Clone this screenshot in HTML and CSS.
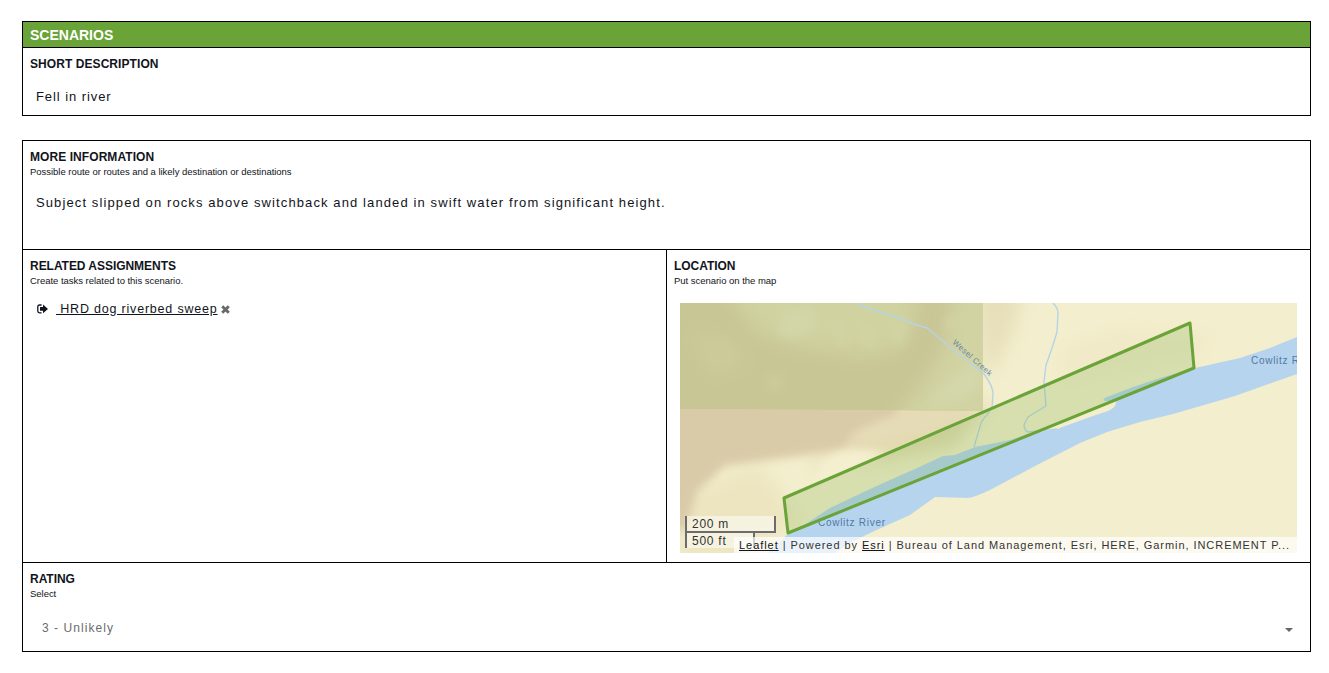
FILE: index.html
```html
<!DOCTYPE html>
<html lang="en">
<head>
<meta charset="utf-8">
<title>Scenarios</title>
<link rel="stylesheet" href="styles.css">
</head>
<body>
<main class="form">
  <section class="panel">
    <h1 class="panel-title">SCENARIOS</h1>
    <div class="field field-short">
      <h2 class="label">SHORT DESCRIPTION</h2>
      <p class="value value-short">Fell in river</p>
    </div>
  </section>

  <section class="panel">
    <div class="field field-info">
      <h2 class="label">MORE INFORMATION</h2>
      <p class="hint">Possible route or routes and a likely destination or destinations</p>
      <p class="value value-info">Subject slipped on rocks above switchback and landed in swift water from significant height.</p>
    </div>
    <div class="split">
      <div class="field">
        <h2 class="label label-tight">RELATED ASSIGNMENTS</h2>
        <p class="hint">Create tasks related to this scenario.</p>
        <div class="assignment">
          <svg class="icon-out" viewBox="0 0 11 10"><path d="M4.600 1H2.500Q.8 1 .8 2.700V7.100Q.8 8.800 2.500 8.800H4.600" fill="none" stroke="#111420" stroke-width="1.300"/><path d="M3 3H6V.6L11 4.900L6 9.200V6.800H3Z" fill="#111420"/></svg>
          <a class="assignment-link">&nbsp;HRD dog riverbed sweep</a>
          <svg class="icon-x" viewBox="0 0 9 9"><path d="M1.200 1.200L7.800 7.800M7.800 1.200L1.200 7.800" stroke="#6a6a6a" stroke-width="2.900"/></svg>
        </div>
      </div>
      <div class="field">
        <h2 class="label label-tight">LOCATION</h2>
        <p class="hint">Put scenario on the map</p>
        <div class="map">
          <svg class="map-canvas" viewBox="680 303 617 250">
            <defs>
              <filter id="soft" x="-20%" y="-20%" width="140%" height="140%"><feGaussianBlur stdDeviation="4"/></filter>
              <filter id="softer" x="-30%" y="-30%" width="160%" height="160%"><feGaussianBlur stdDeviation="9"/></filter>
              <clipPath id="forest"><path d="M680 303H983V411L680 409Z"/></clipPath>
            </defs>
            <rect x="680" y="303" width="617" height="250" fill="#f3eecd"/>
            <g filter="url(#softer)">
              <path d="M975 285H1025L1010 340L985 380Z" fill="#e7dfba"/>
              <path d="M1060 350L1120 330L1210 335L1200 355L1060 380Z" fill="#f1e9c8"/>
              <path d="M860 400H990L975 420L900 455L810 470Z" fill="#e4d9b2"/>
              <path d="M680 495L760 465L800 520L740 560H680Z" fill="#ece5c0"/>
              <path d="M880 440L975 418L955 445L880 460Z" fill="#e0d9ad"/>
            </g>
            <path d="M670 395H900L895 420L850 437L845 449L800 456L725 466L697 492L686 530H670Z" fill="#dacba8" filter="url(#soft)"/>
            <path d="M814 480L819 462L838 451L858 449L885 453L835 485Z" fill="#f4efcf" filter="url(#soft)"/>
            <path d="M850 438Q885 410 945 412L990 406L930 432L870 443Z" fill="#e5dbb6" filter="url(#soft)"/>
            <g clip-path="url(#forest)">
              <path d="M680 303H983V411L680 409Z" fill="#c9c696"/>
              <g filter="url(#softer)">
                <path d="M725 285H920L912 325L902 348L860 356L790 344L755 330Z" fill="#d0d2a0"/>
                <path d="M690 330L735 340L745 365L710 375Z" fill="#cccb9a"/>
                <path d="M955 285H1000V425H890L918 392L945 350Z" fill="#d1d3a3"/>
              </g>
              <g filter="url(#soft)">
                <path d="M783 312L812 306L818 326L796 338L778 334Z" fill="#d3d6a7"/>
                <path d="M830 322L842 320L846 345L836 340ZM858 330L870 322L876 348L864 346ZM890 325L908 318L902 346L893 340Z" fill="#d1d4a3"/>
                <path d="M850 347L858 338L864 352L856 358ZM823 340L830 333L834 345L828 350Z" fill="#cdcd9b"/>
                <path d="M928 407L952 378L976 360L982 385L960 400Z" fill="#d4d7a9"/>
                <path d="M945 322L958 315L958 324L948 329Z" fill="#d3d5a5"/>
                <path d="M765 378L782 374L783 388L770 391Z" fill="#cccb9a"/>
              </g>
            </g>
            <path fill="#b6d4ee" d="M768 553L788 534L807 523L830 508L870 489L917 468L943 456L955 455L975 447L1000 442L1010 440L1027 434L1057 429L1090 417L1108 411Q1117 407 1116 401L1105 401Q1101 399 1107 397L1133 387L1163 377L1195 368L1240 358L1270 348L1297 337V374L1235 396L1173 414L1140 422L1107 432L1080 443L1037 465L990 490Q975 497 968 498L935 497L910 515L870 533L850 543L835 553Z"/>
            <path class="creek" d="M857 303L863 306L880 312L902 319L914 324L927 328L951 348L984 374Q993 386 993 394L992 407L987 415Q981 420 979 430L974 447"/>
            <path class="creek" d="M1053 303Q1058 308 1058 313L1057 332Q1050 355 1046 365L1044 382L1046 406L1028 417Q1024 424 1024 426Q1025 431 1028 432L1057 429"/>
            <g class="water-name">
              <text class="creek-name" transform="translate(952 343) rotate(42)" textLength="50">Wesel Creek</text>
              <text x="818" y="526" textLength="67">Cowlitz River</text>
              <text x="1251" y="364" textLength="67">Cowlitz River</text>
            </g>
            <path class="area" d="M784 498L1190 323L1194 368L788 533Z"/>
          </svg>
          <div class="scale">
            <div class="scale-metric">200 m</div>
            <div class="scale-imperial">500 ft</div>
          </div>
          <div class="attribution"><a>Leaflet</a> | Powered by <a>Esri</a> | Bureau of Land Management, Esri, HERE, Garmin, INCREMENT P...</div>
        </div>
      </div>
    </div>
    <div class="field field-rating">
      <h2 class="label label-tight">RATING</h2>
      <p class="hint">Select</p>
      <div class="select"><span>3 - Unlikely</span><svg class="caret" viewBox="0 0 8 4"><path d="M0 0H8L4 4Z" fill="#666"/></svg></div>
    </div>
  </section>
</main>
</body>
</html>
```
FILE: styles.css
```css
* { box-sizing: border-box; }
body {
  margin: 0;
  background: #fff;
  color: #111420;
  font: 13px/16px "Liberation Sans", Arial, sans-serif;
}
h1, h2, p { margin: 0; }
.form {
  display: flex;
  flex-direction: column;
  gap: 24px;
  width: 1289px;
  margin: 21px 0 0 22px;
}
.panel { border: 1px solid #000; }
.panel-title {
  height: 26px;
  padding-left: 7px;
  border-bottom: 1px solid #000;
  background: #6aa338;
  color: #fff;
  font-size: 14px;
  line-height: 26px;
}
.field { padding: 8px 7px 0; }
.field-short { height: 67px; }
.field-info { height: 108px; }
.label { font-size: 12px; line-height: 16px; letter-spacing: .07px; white-space: nowrap; }
.label-tight { letter-spacing: -.04px; }
.hint { font-size: 9.5px; line-height: 14px; letter-spacing: -.03px; }
.value { padding-left: 6px; letter-spacing: 1px; white-space: nowrap; }
.value-short { margin-top: 17px; letter-spacing: .92px; }
.value-info { margin-top: 16px; letter-spacing: 1.11px; }
.split {
  display: grid;
  grid-template-columns: 643px 1fr;
  height: 314px;
  border-top: 1px solid #000;
  border-bottom: 1px solid #000;
}
.split > .field + .field { border-left: 1px solid #000; }
.assignment {
  display: flex;
  align-items: center;
  margin-top: 13px;
  padding-left: 7px;
  font-size: 12.5px;
  letter-spacing: .8px;
}
.icon-out { width: 11px; height: 10px; margin-right: 8px; }
.icon-x { width: 9px; height: 9px; margin-left: 3px; }
.assignment-link { text-decoration: underline; white-space: nowrap; }
.map {
  position: relative;
  width: 617px;
  height: 250px;
  margin: 15px 0 0 6px;
  overflow: hidden;
}
.map-canvas { display: block; width: 617px; height: 250px; }
.creek { fill: none; stroke: #b6d4e6; stroke-width: 1.4; }
.water-name { fill: #5279a5; font-size: 10px; }
.creek-name { font-size: 8px; fill: #6688a2; }
.area {
  fill: #6aa338;
  fill-opacity: .2;
  stroke: #6aa338;
  stroke-width: 3;
  stroke-linejoin: round;
}
.scale {
  position: absolute;
  left: 5px;
  bottom: 5px;
  color: #333;
  font-size: 12px;
  letter-spacing: .75px;
}
.scale-metric, .scale-imperial {
  padding-left: 5px;
  border: 2px solid #6c6c70;
  border-top: 0;
  background: rgba(255, 255, 255, .5);
}
.scale-metric { width: 91px; height: 17px; line-height: 17px; }
.scale-imperial { width: 70px; height: 15px; border-bottom: 0; line-height: 16px; }
.attribution {
  position: absolute;
  right: 0;
  bottom: 0;
  width: 563px;
  height: 16px;
  padding-left: 5px;
  background: rgba(255, 255, 255, .7);
  color: #333;
  font-size: 11px;
  letter-spacing: .945px;
  white-space: nowrap;
}
.attribution a { color: #111420; text-decoration: underline; }
.field-rating { height: 88px; }
.select {
  display: flex;
  align-items: center;
  justify-content: space-between;
  margin-top: 19px;
  padding: 0 10px 0 12px;
  color: #6c6c6c;
  font-size: 12px;
  letter-spacing: 1.05px;
}
.caret { width: 8px; height: 4px; margin-top: 3px; }
```
